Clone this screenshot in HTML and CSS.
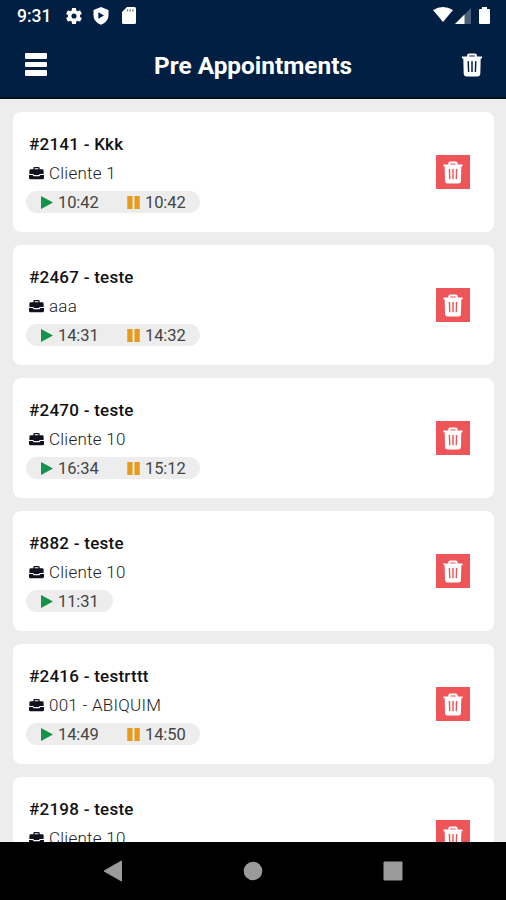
FILE: index.html
```html
<!DOCTYPE html>
<html lang="en">
<head>
<meta charset="utf-8">
<title>Pre Appointments</title>
<link rel="stylesheet" href="styles.css">
</head>
<body>
<svg class="defs" aria-hidden="true">
  <symbol id="trash" viewBox="0 0 20 24">
    <path d="M5 3.600V3Q5 .6 7.400.6h5.200Q15 .6 15 3v.6h5v1.900h-1.300L18.300 21q-.1 2.400-2.500 2.400H4.200Q1.800 23.400 1.700 21L1.300 5.500H0V3.600zM7.200 3.600h5.600V2.500H7.200zM5.500 8.300l.4 10.700h1.400L7 8.300zM9.250 8.300V19h1.500V8.300zM13 8.300L12.700 19h1.400l.4-10.700z" fill="currentColor" fill-rule="evenodd"/>
  </symbol>
  <symbol id="case" viewBox="0 0 16 14">
    <path d="M4.600 3V2q0-1.400 1.400-1.400h4Q11.400.6 11.400 2v1h2.800Q15.600 3 15.600 4.500V8H11v1H5V8H.4V4.500Q.4 3 1.800 3zM6 3h4V1.800H6zM0 9h4l.8 1.500h6.400L12 9h4v3.400q0 1.200-1.200 1.200H1.200Q0 13.600 0 12.400z" fill="currentColor" fill-rule="evenodd"/>
  </symbol>
  <symbol id="play" viewBox="0 0 12 13"><path d="M0 0l12 6.500L0 13z" fill="#16934a"/></symbol>
  <symbol id="pause" viewBox="0 0 13 13"><path d="M.4 0h4.900v13H.4zM7.700 0h4.900v13H7.700z" fill="#e89a1d" stroke="#e89a1d" stroke-width=".4"/></symbol>
</svg>
<div class="screen">
  <header class="header">
    <div class="status">
      <span class="clock">9:31</span>
      <svg class="s-gear" viewBox="2 2 20 20"><path fill="#fff" d="M19.430 12.980c.04-.32.07-.64.07-.98s-.03-.66-.07-.98l2.110-1.650c.19-.15.24-.42.12-.64l-2-3.460c-.12-.22-.39-.3-.61-.22l-2.490 1c-.52-.4-1.080-.73-1.690-.98l-.38-2.650A.488.488 0 0 0 14 2h-4c-.25 0-.46.18-.49.42l-.38 2.650c-.61.25-1.170.59-1.690.98l-2.490-1c-.23-.09-.49 0-.61.22l-2 3.460c-.13.22-.07.49.12.64l2.110 1.650c-.04.32-.07.65-.07.98s.03.66.07.98l-2.110 1.650c-.19.15-.24.42-.12.64l2 3.460c.12.22.39.3.61.22l2.490-1c.52.4 1.080.73 1.690.98l.38 2.650c.03.24.24.42.49.42h4c.25 0 .46-.18.49-.42l.38-2.650c.61-.25 1.170-.59 1.690-.98l2.490 1c.23.09.49 0 .61-.22l2-3.460c.12-.22.07-.49-.12-.64zM12 15.200a3.200 3.200 0 1 1 0-6.400 3.200 3.200 0 0 1 0 6.400z"/></svg>
      <svg class="s-shield" viewBox="0 0 16 18"><path fill="#fff" fill-rule="evenodd" d="M8 0l7.500 3v5.300c0 4.400-3.200 8-7.500 9.500C3.700 16.300.5 12.700.5 8.300V3zM5.300 5.300v6.400L11 8.500z"/></svg>
      <svg class="s-sd" viewBox="0 0 14 17"><path fill="#fff" d="M5 0h7.500Q14 0 14 1.500v14q0 1.500-1.500 1.500h-11Q0 17 0 15.500V5z"/><path d="M5.500 2.200v2.300M8.200 2.200v2.300M10.900 2.200v2.300" stroke="#7d8796" stroke-width="1.400"/></svg>
      <svg class="s-wifi" viewBox="0 0 20 15"><path fill="#fff" d="M0 3Q10-3 20 3L10 15z"/></svg>
      <svg class="s-cell" viewBox="0 0 16 16"><path fill="#496078" d="M0 16L16 0v16z"/><path fill="#fff" d="M0 16L9.500 6.500V16z"/></svg>
      <svg class="s-batt" viewBox="0 0 11 17"><path fill="#fff" d="M3 0h5v2h2q1 0 1 1v13q0 1-1 1H1q-1 0-1-1V3q0-1 1-1h2z"/></svg>
    </div>
    <div class="bar">
      <div class="menu"><i></i><i></i><i></i></div>
      <h1>Pre Appointments</h1>
      <svg class="bar-trash"><use href="#trash"/></svg>
    </div>
  </header>
  <main class="list">
    <article class="card">
      <div class="info"><h2>#2141 - Kkk</h2><p><svg class="case"><use href="#case"/></svg>Cliente 1</p>
        <div class="times"><svg class="play"><use href="#play"/></svg><span>10:42</span><svg class="pause"><use href="#pause"/></svg><span>10:42</span></div></div>
      <div class="del"><svg><use href="#trash"/></svg></div>
    </article>
    <article class="card">
      <div class="info"><h2>#2467 - teste</h2><p><svg class="case"><use href="#case"/></svg>aaa</p>
        <div class="times"><svg class="play"><use href="#play"/></svg><span>14:31</span><svg class="pause"><use href="#pause"/></svg><span>14:32</span></div></div>
      <div class="del"><svg><use href="#trash"/></svg></div>
    </article>
    <article class="card">
      <div class="info"><h2>#2470 - teste</h2><p><svg class="case"><use href="#case"/></svg>Cliente 10</p>
        <div class="times"><svg class="play"><use href="#play"/></svg><span>16:34</span><svg class="pause"><use href="#pause"/></svg><span>15:12</span></div></div>
      <div class="del"><svg><use href="#trash"/></svg></div>
    </article>
    <article class="card">
      <div class="info"><h2>#882 - teste</h2><p><svg class="case"><use href="#case"/></svg>Cliente 10</p>
        <div class="times"><svg class="play"><use href="#play"/></svg><span>11:31</span></div></div>
      <div class="del"><svg><use href="#trash"/></svg></div>
    </article>
    <article class="card">
      <div class="info"><h2>#2416 - testrttt</h2><p><svg class="case"><use href="#case"/></svg>001 - ABIQUIM</p>
        <div class="times"><svg class="play"><use href="#play"/></svg><span>14:49</span><svg class="pause"><use href="#pause"/></svg><span>14:50</span></div></div>
      <div class="del"><svg><use href="#trash"/></svg></div>
    </article>
    <article class="card">
      <div class="info"><h2>#2198 - teste</h2><p><svg class="case"><use href="#case"/></svg>Cliente 10</p></div>
      <div class="del"><svg><use href="#trash"/></svg></div>
    </article>
  </main>
  <nav class="nav">
    <svg viewBox="0 0 20 22"><path fill="#9b9b9b" d="M1 11L18.500 1v20z" stroke="#9b9b9b" stroke-linejoin="round"/></svg>
    <svg viewBox="0 0 20 22"><circle cx="10" cy="11" r="9.300" fill="#9b9b9b"/></svg>
    <svg viewBox="0 0 20 22"><rect x=".5" y="1.500" width="19" height="19" rx="1" fill="#9b9b9b"/></svg>
  </nav>
</div>
</body>
</html>
```
FILE: styles.css
```css
* { box-sizing: border-box; }
body { margin: 0; font-family: Roboto, "Liberation Sans", sans-serif; }
h1, h2, p { margin: 0; }
svg { display: block; flex: none; }
.defs { display: none; }
.screen { width: 506px; height: 900px; display: flex; flex-direction: column; background: #ededed; overflow: hidden; }
.header { flex: none; height: 99px; background: #001f43; border-bottom: 2px solid #07101d; color: #fff; }
.status { height: 32px; display: flex; align-items: center; padding: 0 16px 0 17px; }
.clock { width: 49px; font-size: 17.500px; font-weight: 500; line-height: 32px; }
.s-gear { width: 16px; height: 16px; }
.s-shield { width: 16px; height: 18px; margin-left: 11px; }
.s-sd { width: 14px; height: 17px; margin-left: 13px; margin-top: -1px; }
.s-wifi { width: 20px; height: 15px; margin-left: auto; margin-top: -3px; }
.s-cell { width: 16px; height: 16px; margin-left: 2px; }
.s-batt { width: 11px; height: 17px; margin-left: 8px; margin-top: -2px; }
.bar { height: 65px; display: flex; align-items: center; justify-content: space-between; padding: 0 24px 0 25px; }
.menu { width: 22px; display: flex; flex-direction: column; gap: 3px; }
.menu i { height: 5.500px; background: #fff; border-radius: 1px; }
.bar h1 { font-size: 24.400px; line-height: 32px; font-weight: 700; margin-top: 3px; margin-left: -3px; }
.bar-trash { width: 20px; height: 24px; }
.list { flex: 1; min-height: 0; overflow: hidden; padding: 13px 12px 0 13px; display: flex; flex-direction: column; gap: 13px; }
.card { flex: none; height: 120px; background: #fff; border-radius: 8px; display: flex; justify-content: space-between; align-items: center; padding: 0 24px 0 13px; }
.info { align-self: flex-start; padding-top: 20px; }
.info h2 { font-size: 17px; line-height: 24px; font-weight: 500; color: #111; padding-left: 3px; letter-spacing: .25px; }
.info p { display: flex; align-items: center; height: 24px; margin-top: 5px; padding-left: 3px; font-size: 17px; font-weight: 300; color: #222; letter-spacing: .25px; }
.case { width: 15px; height: 14px; margin-right: 5px; color: #10131f; }
.times { width: fit-content; height: 22px; margin-top: 6px; padding: 0 15px; border-radius: 11px; background: #ededed; display: flex; align-items: center; font-size: 16.500px; color: #444; font-weight: 400; }
.times span { width: 40px; margin-left: 5px; letter-spacing: -.1px; }
.play { width: 12px; height: 13px; }
.pause { width: 13px; height: 13px; margin-left: 29px; }
.del { width: 34px; height: 34px; background: #ee5558; display: flex; align-items: center; justify-content: center; color: #fff; }
.del svg { width: 20px; height: 23px; }
.nav { flex: none; height: 58px; background: #000; display: flex; justify-content: center; align-items: center; gap: 120px; }
.nav svg { width: 20px; height: 22px; }
```
